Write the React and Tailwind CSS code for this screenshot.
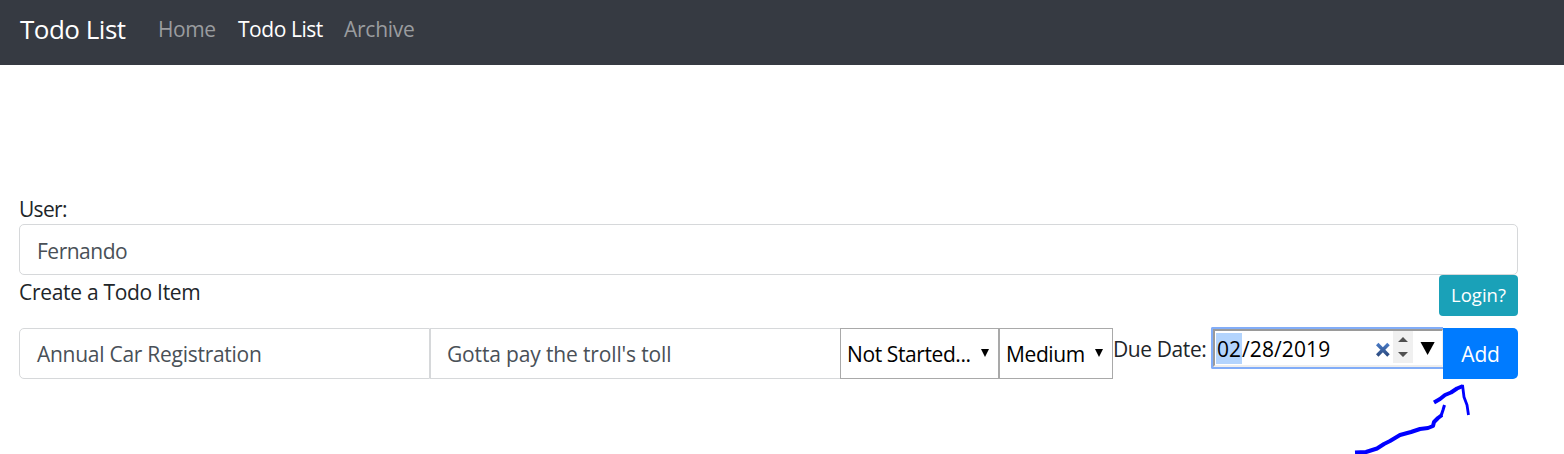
function NavBar() {
  return (
    <nav className="flex h-[65px] items-start bg-[#363a42] pl-[20px] text-[21px] leading-[30px]">
      <a className="mr-[31px] w-[107px] pt-[14px] text-[26px] tracking-[-0.5px] text-white">Todo List</a>
      <a className="w-[80px] pt-[14px] tracking-[-0.4px] text-[#9a9c9f]">Home</a>
      <a className="w-[106px] pt-[14px] tracking-[-0.45px] text-white">Todo List</a>
      <a className="pt-[14px] tracking-[-0.25px] text-[#9a9c9f]">Archive</a>
    </nav>
  );
}

function SelectBox({ label, className }) {
  return (
    <div className={"flex h-[51px] items-center justify-between border border-[#a9a9a9] pl-[6px] pr-[9px] text-black " + className}>
      <span className="pt-px">{label}</span>
      <svg width="8" height="8" viewBox="0 0 8 8" className="-mt-[2px]">
        <path d="M0 0H8L4 8Z" fill="#000" />
      </svg>
    </div>
  );
}

function DateInput() {
  return (
    <div className="-mt-px flex h-[42px] w-[232px] shrink-0 rounded-l-[2px] border-2 border-r-0 border-[#82adf8]">
      <div className="flex w-full items-start border-2 border-r border-t-[#9a9a9a] border-r-[#eeeeee] border-b-[#eeeeee] border-l-[#9a9a9a] pl-px text-black">
        <div className="mt-[2px] flex h-[31px] w-[160px] shrink-0 items-center tracking-[0.1px]">
          <span className="flex h-[31px] w-[26px] items-center bg-[#b3d4fd] pl-px">02</span>
          <span>/28/2019</span>
        </div>
        <svg width="66" height="34" viewBox="0 0 66 34" className="shrink-0">
          <defs>
            <linearGradient id="clear" x1="0" y1="12" x2="0" y2="26" gradientUnits="userSpaceOnUse">
              <stop stopColor="#4a7cc8" />
              <stop offset="1" stopColor="#2a4678" />
            </linearGradient>
          </defs>
          <path d="M1.200 13L12.500 24.500M12.500 13L1.200 24.500" stroke="url(#clear)" strokeWidth="3.500" />
          <rect x="17" y="0" width="20" height="32" fill="#f0f0f0" />
          <path d="M22 11L27 6L32 11ZM22 21L27 26L32 21Z" fill="#505050" />
          <path d="M44.500 11H58.700L51.600 24Z" fill="#000" />
        </svg>
      </div>
    </div>
  );
}

function HandDrawnArrow() {
  return (
    <svg className="pointer-events-none absolute left-[1344px] top-[375px]" width="140" height="79" viewBox="1344 375 140 79" fill="none" stroke="#0000ff" strokeLinejoin="round">
      <path d="M1355 452.500L1366 452L1377 448.500L1384 444L1390 441L1400 435L1411 432L1420 429L1428 428L1433 426L1434 422L1438 418L1442 415" strokeWidth="4" />
      <path d="M1441 416L1443 410L1444.500 405" strokeWidth="3" />
      <path d="M1434 402.500L1440 399L1445 395L1451 392.500L1457 388.500L1463 386" strokeWidth="4" />
      <path d="M1462.500 385L1464 397L1467 405L1468.500 415" strokeWidth="2.800" />
    </svg>
  );
}

export default function App() {
  return (
    <div className="relative h-[454px] w-[1564px] overflow-hidden bg-white font-['Open_Sans',sans-serif] text-[21px] leading-[30px] whitespace-nowrap text-[#212529]">
      <NavBar />
      <main className="ml-[19px] w-[1499px] pt-[129px]">
        <div className="h-[30px] tracking-[-0.7px]">User:</div>
        <div className="flex h-[51px] items-center rounded-[5px] border border-[#d6d8da] pl-[17px] pt-[3px] tracking-[-0.5px] text-[#495057]">Fernando</div>
        <div className="flex h-[53px] items-start justify-between">
          <span className="pt-[2px] tracking-[-0.3px]">Create a Todo Item</span>
          <button className="h-[41px] w-[79px] rounded-[4px] bg-[#1aa1b8] pb-[2px] text-[18.5px] tracking-[0px] text-white">Login?</button>
        </div>
        <div className="flex items-start">
          <div className="flex h-[51px] w-[411px] items-center rounded-l-[5px] border border-[#d6d8da] pl-[17px] pt-px tracking-[-0.27px] text-[#495057]">Annual Car Registration</div>
          <div className="flex h-[51px] w-[410px] items-center border border-r-0 border-[#d6d8da] pl-[16px] pt-px tracking-[-0.15px] text-[#495057]">Gotta pay the troll's toll</div>
          <SelectBox label="Not Started..." className="w-[159px] tracking-[-0.4px]" />
          <SelectBox label="Medium" className="w-[114px] tracking-[-0.4px]" />
          <span className="w-[98px] shrink-0 pt-[6px] tracking-[-0.4px]">Due Date:</span>
          <DateInput />
          <button className="h-[51px] w-[75px] shrink-0 rounded-r-[5px] bg-[#007bff] tracking-[-0.2px] text-white">Add</button>
        </div>
      </main>
      <HandDrawnArrow />
    </div>
  );
}
